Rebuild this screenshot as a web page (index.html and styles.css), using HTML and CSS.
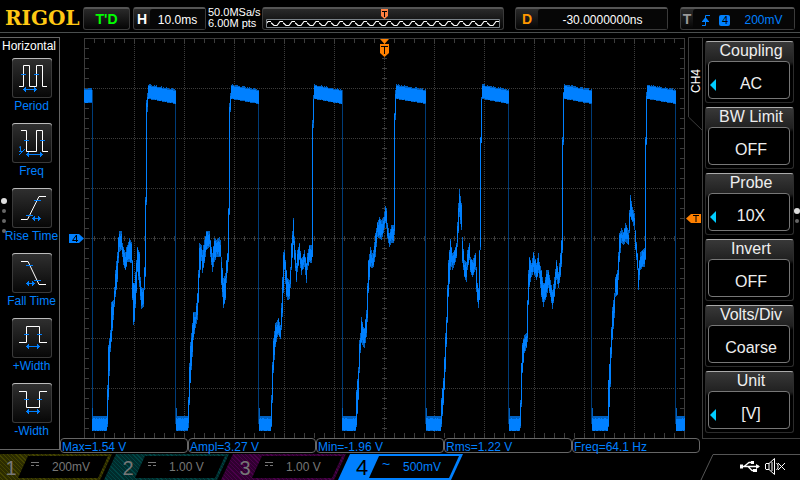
FILE: index.html
```html
<!DOCTYPE html>
<html lang="en">
<head>
<meta charset="utf-8">
<title>RIGOL oscilloscope</title>
<link rel="stylesheet" href="styles.css">
</head>
<body>
<header class="topbar">
  <h1 class="logo">RIGOL</h1>
  <button class="box status" type="button">T'D</button>
  <button class="box timebase" type="button"><b class="key">H</b><span class="readout">10.0ms</span></button>
  <p class="rate">50.0MSa/s<br>6.00M pts</p>
  <div class="box memory">
    <svg class="memory-wave" viewBox="0 0 240 20" aria-hidden="true">
      <defs>
        <pattern id="wave" x="8" width="12" height="20" patternUnits="userSpaceOnUse">
          <path d="M-1 13.500L1 14.500L3 16.500H6L9 12.500H12L13 13.500" fill="none" stroke="#fff" stroke-width="1.200"/>
        </pattern>
      </defs>
      <path d="M3.500 10.500H236.500V18.500H3.500Z" fill="#000" stroke="#7b8288"/>
      <path d="M4 11H236V18H4Z" fill="url(#wave)"/>
      <path d="M118 0H125V7L121.500 10L118 7Z" fill="#ff8040"/>
      <path d="M119 2.500H124M121.500 2V8" stroke="#000"/>
    </svg>
  </div>
  <button class="box delay" type="button"><b class="key">D</b><span class="readout">-30.0000000ns</span></button>
  <button class="box trigger" type="button"><b class="key">T</b>
    <span class="readout">
      <svg class="edge" viewBox="0 0 10 12" aria-hidden="true"><path d="M1 11.500H4.500V1.500H9M1 7.500H8" fill="none" stroke="#0080ff"/><path d="M4.500 3L8 7.500H1Z" fill="#0080ff"/></svg>
      <span class="source">4</span><span>200mV</span>
    </span>
  </button>
</header>

<main class="stage">
  <nav class="measure-menu" aria-label="Horizontal measurements">
    <h2 class="menu-title">Horizontal</h2>
    <button class="measure" type="button">
      <svg class="tile" viewBox="0 0 40 40" aria-hidden="true"><path class="w" d="M7 28.500H11.500V7.500H17.500V28.500H24.500V7.500H30.500V28.500H35"/><path class="b" d="M9 16.500H14M22 16.500H27M11 31.500H25M13.500 29V34M22.500 29V34M12.500 30V33M23.500 30V33"/></svg>
      <span>Period</span></button>
    <button class="measure" type="button">
      <svg class="tile" viewBox="0 0 40 40" aria-hidden="true"><path class="w" d="M9 7.500H14.500V28.500H24.500V7.500H30.500V28.500H36"/><path class="b" d="M12 17.500H17M28 17.500H33M14 31.500H31M16.500 29V34M28.500 29V34M15.500 30V33M29.500 30V33M7 24.500L8.500 23.500V28M7 28.500H10M7 32L13 26"/></svg>
      <span>Freq</span></button>
    <button class="measure" type="button">
      <svg class="tile" viewBox="0 0 40 40" aria-hidden="true"><path class="w" d="M9 31.500H15.500L27 8.500H34"/><path class="b" d="M22 12.500H29M14 27.500H21M20 30.500H29M22.500 28V33M26.500 28V33M21.500 29V32M27.500 29V32"/></svg>
      <span>Rise Time</span></button>
    <button class="measure" type="button">
      <svg class="tile" viewBox="0 0 40 40" aria-hidden="true"><path class="w" d="M9 8.500H16L27 31.500H34"/><path class="b" d="M14 12.500H21M22 27.500H29M14 30.500H23M16.500 28V33M20.500 28V33M15.500 29V32M21.500 29V32"/></svg>
      <span>Fall Time</span></button>
    <button class="measure" type="button">
      <svg class="tile" viewBox="0 0 40 40" aria-hidden="true"><path class="w" d="M7 24.500H14.500V8.500H27.500V24.500H35"/><path class="b" d="M12 16.500H17M25 16.500H30M14 28.500H28M16.500 26V31M25.500 26V31M15.500 27V30M26.500 27V30"/></svg>
      <span>+Width</span></button>
    <button class="measure" type="button">
      <svg class="tile" viewBox="0 0 40 40" aria-hidden="true"><path class="w" d="M7 8.500H14.500V24.500H27.500V8.500H35"/><path class="b" d="M12 16.500H17M25 16.500H30M14 28.500H28M16.500 26V31M25.500 26V31M15.500 27V30M26.500 27V30"/></svg>
      <span>-Width</span></button>
    <div class="dots dots-left"><i class="on"></i><i></i><i></i><i></i></div>
  </nav>

  <section class="center">
    <svg class="scope" viewBox="60 33 642 405" role="img" aria-label="Channel 4 waveform">
      <g stroke="#3c3c3c" fill="none" shape-rendering="crispEdges">
        <path stroke-dasharray="1 1" d="M134.500 39V438M184.500 39V438M234.500 39V438M284.500 39V438M334.500 39V438M384.500 39V438M434.500 39V438M484.500 39V438M534.500 39V438M584.500 39V438M634.500 39V438M85 88.500H684M85 138.500H684M85 188.500H684M85 238.500H684M85 288.500H684M85 338.500H684M85 388.500H684"/>
        <path stroke-width="5" stroke-dasharray="1 9" d="M94 40.500H684M94 238.500H684M94 435.500H684M86.500 48V437M682.500 48V437M384.500 48V437"/>
        <path d="M84.500 438V38.500H684.500V438"/>
        <path shape-rendering="auto" d="M702 37.500H688.500V117L702.500 130.500"/>
      </g>
      <g id="trace" fill="none" stroke="#0080ff" shape-rendering="crispEdges"></g>
      <path d="M380 39H389L384.500 44ZM380 44H389V53L384.500 57L380 53Z" fill="#ff8000"/>
      <path d="M381 46.500H388M384.500 46V54" stroke="#000"/>
      <path d="M69 234H79L84 238.500L79 243H69Z" fill="#0080ff"/>
      <path d="M76.500 242V235L72.500 240.500H78" fill="none" stroke="#000"/>
      <path d="M701 214V223H691L686 218.500L691 214Z" fill="#ff8000"/>
      <path d="M693 215.500H699M696 215.500V222" stroke="#000"/>
      <text class="tab-name" transform="translate(700 93) rotate(-90)">CH4</text>
    </svg>
    <ul class="results">
      <li>Max=1.54 V</li><li>Ampl=3.27 V</li><li>Min=-1.96 V</li><li>Rms=1.22 V</li><li>Freq=64.1 Hz</li>
    </ul>
  </section>

  <nav class="channel-menu" aria-label="CH4">
    <button class="option more" type="button"><span>Coupling</span><span class="value">AC</span></button>
    <button class="option" type="button"><span>BW Limit</span><span class="value">OFF</span></button>
    <button class="option more" type="button"><span>Probe</span><span class="value">10X</span></button>
    <button class="option" type="button"><span>Invert</span><span class="value">OFF</span></button>
    <button class="option" type="button"><span>Volts/Div</span><span class="value">Coarse</span></button>
    <button class="option more" type="button"><span>Unit</span><span class="value">[V]</span></button>
    <div class="dots dots-right"><i class="on"></i><i></i></div>
  </nav>
</main>

<footer class="bottombar">
  <button class="channel ch1" type="button"><b>1</b><span class="scale"><i class="dc"></i><span>200mV</span></span></button>
  <button class="channel ch2" type="button"><b>2</b><span class="scale"><i class="dc"></i><span>1.00 V</span></span></button>
  <button class="channel ch3" type="button"><b>3</b><span class="scale"><i class="dc"></i><span>1.00 V</span></span></button>
  <button class="channel ch4" type="button"><b>4</b><span class="scale"><i class="ac">~</i><span>500mV</span></span></button>
  <svg class="tray" viewBox="0 0 100 26" aria-hidden="true">
    <path d="M1 26L13 .500H100" fill="none" stroke="#555"/>
    <g fill="none" stroke="#fff">
      <path d="M41 12.500H59M44 12.500L49 8.500H53M48 12.500L52 16.500H55" stroke-width="1.300"/>
      <path d="M69 9.500H66L65.500 10V15L66 15.500H69L74.500 20.500V4.500L69 9.500V15.500M72 8V17M76.500 9L78 11V14L76.500 16"/>
      <path d="M78 9L85 16M85 9L78 16"/>
    </g>
    <path d="M40 10.500H43V14.500H40ZM51 7H54V10H51ZM53 15H57V18H53ZM56 10L60 12.500L56 15Z" fill="#fff"/>
  </svg>
</footer>
<script src="trace.js"></script>
</body>
</html>
```
FILE: styles.css
```css
* { box-sizing: border-box; }

body {
  margin: 0;
  min-height: 100vh;
  display: flex;
  flex-direction: column;
  background: #000;
  color: #fff;
  font: 12px/16px "Liberation Sans", Arial, sans-serif;
}

h1, h2, p, ul { margin: 0; padding: 0; list-style: none; }

button {
  margin: 0;
  padding: 0;
  border: 0;
  background: none;
  color: inherit;
  font: inherit;
}

/* top bar */
.topbar {
  display: flex;
  align-items: flex-start;
  height: 33px;
  padding: 7px 5px 0 5px;
  border-bottom: 1px solid #4a4e4e;
}

.logo {
  width: 78px;
  color: #ffc814;
  font: bold 20px/22px "DejaVu Serif", serif;
}

.box {
  display: flex;
  align-items: center;
  height: 23px;
  border: 1px solid #3a3a3a;
  border-top: 2px solid #555;
  border-radius: 3px;
  background: linear-gradient(#2a2a2a, #050505);
}

.status {
  justify-content: center;
  width: 47px;
  margin-right: 3px;
  color: #00ff00;
  font-size: 14px;
  font-weight: bold;
}

.timebase { width: 73px; }

.key {
  width: 16px;
  font-size: 14px;
  text-align: center;
}

.readout {
  display: flex;
  flex: 1;
  align-items: center;
  justify-content: center;
  height: 100%;
  padding-top: 2px;
  background: #060606;
  border-radius: 3px 0 0 0;
}

.rate {
  width: 56px;
  padding-left: 2px;
  font-size: 11px;
  line-height: 11px;
}

.memory { flex: 1; }
.memory-wave { width: 100%; height: 20px; }

.delay { width: 153px; margin: 0 12px 0 11px; }
.delay .key { width: 22px; color: #ff9800; }

.trigger { width: 115px; color: #0080ff; }
.trigger .key { width: 12px; color: #999; }
.trigger .readout { gap: 8px; padding-right: 3px; }
.edge { width: 10px; height: 12px; }

.source {
  width: 11px;
  margin-right: 6px;
  border-radius: 2px;
  background: #0080ff;
  color: #000;
  font-size: 11px;
  line-height: 11px;
  text-align: center;
}

/* middle */
.stage {
  display: grid;
  flex: 1;
  grid-template-columns: 60px 1fr 98px;
}

.measure-menu {
  position: relative;
  display: flex;
  flex-direction: column;
  margin: 4px 0;
  border: solid #666;
  border-width: 1px 1px 1px 0;
}

.menu-title {
  height: 20px;
  padding-left: 2px;
  font-size: 12px;
  font-weight: normal;
}

.measure {
  display: flex;
  flex-direction: column;
  align-items: center;
  height: 65px;
  padding-left: 4px;
  color: #0080ff;
  white-space: nowrap;
}

.tile {
  flex: none;
  width: 40px;
  height: 40px;
  border-radius: 3px;
  background: linear-gradient(#303030, #060606);
  box-shadow: inset 0 1px #bbb, inset 0 0 0 1px #3a3a3a;
}

.w, .b { fill: none; stroke: #fff; }
.b { stroke: #0080ff; }

.dots { position: absolute; display: grid; justify-items: center; width: 6px; }
.dots i { width: 4px; height: 4px; margin: 3px 0; border-radius: 50%; background: #666; }
.dots .on { width: 6px; height: 6px; margin: 2px 0; background: #ddd; }
.dots-left { left: 1px; top: 158px; }
.dots-right { right: 0; top: 168px; }

.center {
  display: flex;
  flex-direction: column;
  min-width: 0;
}

.scope { display: block; width: 100%; overflow: visible; }
.tab-name { fill: #fff; font-size: 12px; }

.results {
  display: grid;
  grid-template-columns: repeat(5, 1fr);
  margin-right: 2px;
  color: #0080ff;
}

.results li {
  height: 15px;
  padding-left: 1px;
  border: 1px solid #666;
  border-radius: 4px;
  line-height: 16px;
}

.channel-menu {
  position: relative;
  display: flex;
  flex-direction: column;
  gap: 4px;
  margin: 4px 0 15px;
  padding: 3px 6px 0 2px;
  border: solid #3c3c3c;
  border-width: 1px 0 1px 1px;
}

.option {
  display: flex;
  flex-direction: column;
  height: 62px;
  padding: 0 3px 3px 2px;
  border: 1px solid #2c2c2c;
  border-top: 1px solid #aaa;
  border-radius: 3px;
  background: linear-gradient(#383838, #202020 20px, #000 24px);
  color: #eee;
  font-size: 16px;
  line-height: 18px;
}

.value {
  position: relative;
  height: 38px;
  margin-top: 1px;
  padding-left: 4px;
  border: 1px solid #777;
  border-radius: 4px;
  background: #000;
  line-height: 43px;
}

.option span { display: block; width: 100%; }
.option span:first-child { padding-left: 4px; }

.more .value::before {
  content: "";
  position: absolute;
  left: 1px;
  top: 17px;
  border: solid transparent;
  border-width: 6px 6px 6px 0;
  border-right-color: #00ccff;
}

/* channel tabs */
.bottombar { display: flex; height: 26px; overflow: hidden; }

.channel {
  display: flex;
  flex: none;
  width: 125px;
  margin-right: -8px;
  padding: 2px 4px 2px 0;
  clip-path: polygon(12px 0, 100% 0, calc(100% - 12px) 100%, 0 100%);
  color: #777;
}

.channel b {
  width: 31px;
  padding-left: 17px;
  font-size: 20px;
  font-weight: normal;
  line-height: 24px;
}

.scale {
  display: flex;
  flex: 1;
  align-items: center;
  gap: 13px;
  height: 22px;
  padding-left: 13px;
  background: #000;
  clip-path: polygon(10px 0, 100% 0, calc(100% - 10px) 100%, 0 100%);
}

.dc {
  width: 8px;
  height: 4px;
  margin-bottom: 6px;
  border-top: 1px solid #777;
  border-bottom: 1px dashed #777;
}

.ac { width: 8px; margin-bottom: 6px; font-style: normal; font-size: 14px; }

.ch1 { margin-left: -13px; background: repeating-linear-gradient(45deg, #2c2c00 0 2px, #444400 2px 3px); }
.ch2 { background: repeating-linear-gradient(45deg, #002c2c 0 2px, #004444 2px 3px); }
.ch3 { background: repeating-linear-gradient(45deg, #300030 0 2px, #4a004a 2px 3px); }
.ch4 { background: #0080ff; color: #0080ff; }
.ch4 b { color: #000; font-size: 22px; }

.tray { width: 100px; height: 26px; margin-left: auto; }
```
FILE: trace.js
```js
// Envelope of the trace: x, top, bottom. Columns between entries are interpolated.
const bursts = [
  "107,385,427 108,345,400 110,330,352 111,302,342 113,300,320 114,287,307 115,270,297 117,252,282 118,237,263 119,231,252 121,231,250 122,243,257 123,247,265 125,252,270 126,247,267 127,245,262 129,238,262 131,242,263 132,260,300 133,283,325 134,283,322 136,260,293 137,247,272 139,252,287 140,277,300 141,287,309 143,288,307 144,267,290 145,197,277 146,100,205 147,93,112",
  "188,397,428 189,363,405 190,342,383 192,323,357 193,312,340 195,312,328 197,293,320 198,270,303 199,243,278 201,245,261 202,250,273 204,240,263 206,231,250 209,231,247 210,240,257 212,253,272 214,238,262 216,240,257 219,237,257 220,240,257 221,257,285 223,278,308 225,273,300 226,260,283 227,253,273 228,208,262 229,103,215 230,93,112",
  "271,395,427 272,362,403 273,338,373 275,323,347 277,320,337 278,318,335 280,325,339 281,303,330 282,277,317 283,252,293 284,250,270 286,270,297 287,278,300 289,280,299 290,267,288 291,243,270 293,218,245 294,237,260 296,263,282 297,250,272 299,243,260 301,258,275 302,257,270 304,250,267 306,263,283 307,253,270 309,245,262 311,245,263 312,120,257 313,95,128",
  "356,390,427 358,367,400 359,340,373 360,333,353 361,317,343 363,327,347 364,328,348 366,310,337 367,283,322 368,260,293 370,247,267 372,253,268 373,250,267 375,233,257 377,222,237 379,217,238 381,220,240 383,217,233 385,206,223 386,208,228 387,223,238 389,233,247 391,225,243 393,225,243 394,113,235 395,90,120",
  "441,398,427 443,378,405 444,357,390 445,333,372 446,317,347 447,285,323 448,260,297 450,239,270 451,247,267 452,253,270 454,250,265 456,243,258 457,222,247 458,203,233 459,189,217 461,203,230 462,237,263 464,260,277 466,262,282 467,250,270 469,243,260 470,257,272 472,260,277 475,253,270 476,267,292 477,283,302 478,288,308 479,250,300 480,137,250 481,97,143",
  "520,400,428 521,363,407 522,343,373 524,335,353 526,333,348 527,300,342 528,270,305 529,257,287 531,263,277 533,252,272 536,263,280 538,253,273 539,262,278 541,270,297 543,283,307 544,283,302 546,270,297 548,270,288 550,280,297 552,290,309 554,277,297 556,260,280 558,272,288 560,253,277 561,240,267 562,137,253 563,92,145",
  "608,380,427 610,347,387 611,327,358 612,307,340 614,293,318 615,277,297 617,270,295 618,252,280 619,233,262 621,228,243 623,232,245 625,223,242 628,230,245 629,210,233 630,195,217 632,207,222 634,213,230 635,230,250 637,253,270 638,268,290 640,252,270 642,250,267 644,248,267 645,137,260 646,92,145"
];
const highs = [[84, 91], [148, 175], [231, 258], [314, 341], [396, 425], [482, 508], [564, 591], [647, 675]];
const lows = [[92, 106], [176, 187], [259, 270], [342, 355], [426, 440], [509, 519], [592, 607], [676, 684]];
const falls = [92, 175, 258, 342, 425, 508, 591, 675];

const jitter = (x, n) => Math.abs(Math.round(Math.sin(x * 12.9898) * 43758)) % n;
const column = (x, top, bottom) => `M${x + 0.5} ${Math.round(top)}V${Math.round(bottom)}`;
let body = "";
let haze = "";

for (const burst of bursts) {
  const keys = burst.split(" ").map(k => k.split(",").map(Number));
  for (let i = 0; i < keys.length; i++) {
    const a = keys[i];
    const b = keys[i + 1] || [a[0] + 1, a[1], a[2]];
    for (let x = a[0]; x < b[0]; x++) {
      const t = (x - a[0]) / (b[0] - a[0]);
      const top = a[1] + (b[1] - a[1]) * t;
      const bottom = a[2] + (b[2] - a[2]) * t;
      const trim = bottom - top > 40 ? 0 : 1;
      haze += column(x, top, bottom);
      body += column(x, top + trim + jitter(x, 5), bottom - trim - jitter(x + 7, 5));
    }
  }
}
for (const [from, to] of highs) {
  for (let x = from; x <= to; x++) {
    const slope = from === 84 ? 4 : (x - from) / (to - from) * 5;
    haze += column(x, 84 + slope + jitter(x, 2), 99 + slope);
    body += column(x, 86 + slope, 98 + slope + jitter(x, 2) / 2);
  }
}
for (const [from, to] of lows) {
  for (let x = from; x <= to; x++) {
    haze += column(x, x === from ? 408 : 416, 431);
    body += column(x, 418 + jitter(x, 2), 430 + jitter(x, 2));
  }
}
const drops = falls.map(x => column(x, 90, 424)).join("");
document.getElementById("trace").innerHTML =
  `<path stroke="#003c78" d="${drops}"/><path stroke="#0060c0" d="${haze}"/><path d="${body}"/>`;
```
